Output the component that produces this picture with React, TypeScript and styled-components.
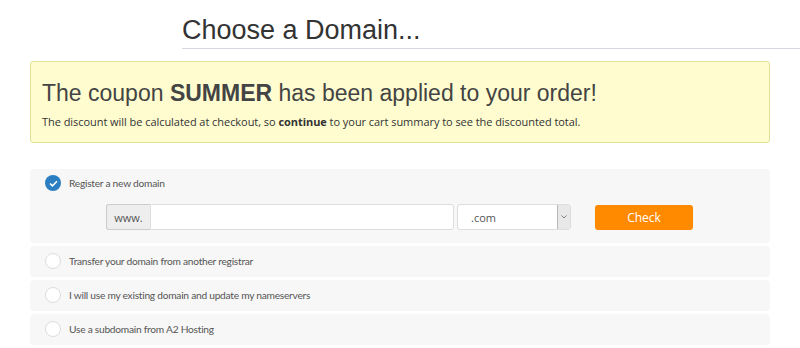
import React from 'react';
import styled, { createGlobalStyle } from 'styled-components';

const GlobalStyle = createGlobalStyle`
  body {
    margin: 0;
    background: #fff;
    font-family: 'Open Sans', sans-serif;
    color: #555;
  }
`;

const Page = styled.div`
  width: 800px;
  height: 348px;
  overflow: hidden;
`;

const Header = styled.h1`
  margin: 0 0 12px 182px;
  padding: 15px 0 3px;
  font-family: 'Liberation Sans', Arial, sans-serif;
  font-weight: 400;
  font-size: 27px;
  line-height: 30px;
  color: #333;
  border-bottom: 1px solid #d8d6df;
`;

const Alert = styled.div`
  margin: 0 30px;
  padding: 18px 11px 12px;
  background: #fffdd0;
  border: 1px solid #e2df96;
  border-radius: 3px;
`;

const AlertTitle = styled.h2`
  margin: 0 0 8px;
  font-family: 'Liberation Sans', Arial, sans-serif;
  font-weight: 400;
  font-size: 23px;
  line-height: 26px;
  color: #444;
  strong { font-weight: 700; }
`;

const AlertText = styled.p`
  margin: 0;
  font-size: 11px;
  line-height: 16px;
  letter-spacing: -0.05px;
  color: #333;
  strong { font-weight: 700; }
`;

const Options = styled.div`
  margin: 26px 30px 0;
  display: flex;
  flex-direction: column;
  gap: 3px;
`;

const Option = styled.div<{ $open?: boolean }>`
  background: #f7f7f7;
  border-radius: 4px;
  padding: ${({ $open }) => ($open ? '6px 16px 7px 15px' : '7px 16px 8px 15px')};
`;

const OptionLabel = styled.label`
  display: flex;
  align-items: center;
  gap: 8px;
  height: 16px;
  font-family: Lato, 'Open Sans', sans-serif;
  font-size: 10.2px;
  letter-spacing: -0.25px;
  color: #555;
`;

const RadioEmpty = styled.span`
  width: 16px;
  height: 16px;
  box-sizing: border-box;
  border-radius: 50%;
  border: 1px solid #dcdcdc;
  background: #fff;
  flex: none;
`;

const RadioChecked = styled.span`
  width: 16px;
  height: 16px;
  border-radius: 50%;
  background: #2a7ec1;
  display: flex;
  align-items: center;
  justify-content: center;
  flex: none;
`;

const SearchRow = styled.div`
  display: flex;
  align-items: center;
  margin: 13px 0 6px 61px;
`;

const Addon = styled.span`
  box-sizing: border-box;
  height: 26px;
  width: 44px;
  display: flex;
  align-items: center;
  justify-content: center;
  background: #eee;
  border: 1px solid #ccc;
  border-right: none;
  border-radius: 3px 0 0 3px;
  font-size: 11px;
  color: #555;
`;

const TextInput = styled.input`
  box-sizing: border-box;
  height: 26px;
  width: 304px;
  border: 1px solid #ddd;
  border-radius: 0 3px 3px 0;
  background: #fff;
  outline: none;
`;

const SelectBox = styled.div`
  box-sizing: border-box;
  margin-left: 3px;
  height: 26px;
  width: 114px;
  display: flex;
  border: 1px solid #ddd;
  border-radius: 3px;
  background: #fff;
  font-size: 11px;
  color: #555;
`;

const SelectValue = styled.span`
  flex: 1;
  display: flex;
  align-items: center;
  padding-left: 13px;
`;

const SelectArrow = styled.span`
  width: 12px;
  display: flex;
  align-items: center;
  justify-content: center;
  background: #e8e8e8;
  border-left: 1px solid #b8b8b8;
  border-radius: 0 2px 2px 0;
`;

const CheckButton = styled.button`
  margin-left: 24px;
  height: 25px;
  width: 98px;
  border: none;
  border-radius: 3px;
  background: #ff8a00;
  color: #fff;
  font-family: 'Open Sans', sans-serif;
  font-size: 12px;
`;

const others = [
  'Transfer your domain from another registrar',
  'I will use my existing domain and update my nameservers',
  'Use a subdomain from A2 Hosting',
];

export default function App() {
  return (
    <Page>
      <GlobalStyle />
      <Header>Choose a Domain...</Header>
      <Alert>
        <AlertTitle>
          The coupon <strong>SUMMER</strong> has been applied to your order!
        </AlertTitle>
        <AlertText>
          The discount will be calculated at checkout, so <strong>continue</strong> to your cart
          summary to see the discounted total.
        </AlertText>
      </Alert>
      <Options>
        <Option $open>
          <OptionLabel>
            <RadioChecked>
              <svg width="9" height="7" viewBox="0 0 9 7">
                <path d="M1 3.5 L3.4 5.8 L8 1.2" fill="none" stroke="#fff" strokeWidth="1.6" />
              </svg>
            </RadioChecked>
            Register a new domain
          </OptionLabel>
          <SearchRow>
            <Addon>www.</Addon>
            <TextInput />
            <SelectBox>
              <SelectValue>.com</SelectValue>
              <SelectArrow>
                <svg width="6" height="4" viewBox="0 0 6 4">
                  <path d="M0.5 0.5 L3 3 L5.5 0.5" fill="none" stroke="#777" strokeWidth="0.9" />
                </svg>
              </SelectArrow>
            </SelectBox>
            <CheckButton>Check</CheckButton>
          </SearchRow>
        </Option>
        {others.map((text) => (
          <Option key={text}>
            <OptionLabel>
              <RadioEmpty />
              {text}
            </OptionLabel>
          </Option>
        ))}
      </Options>
    </Page>
  );
}
